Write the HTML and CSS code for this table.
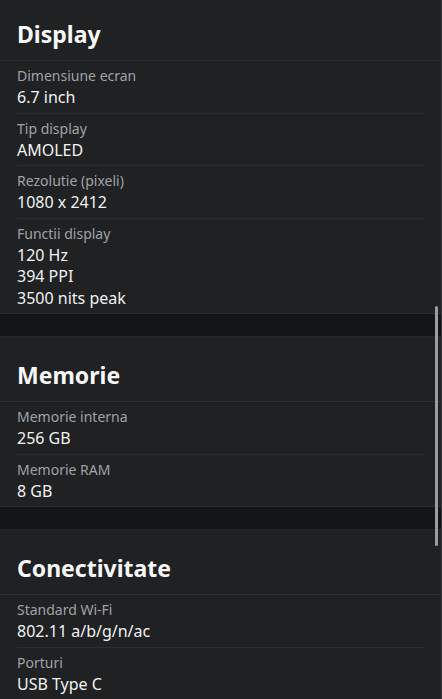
FILE: index.html
```html
<!DOCTYPE html>
<html lang="ro">
<head>
    <meta charset="UTF-8">
    <meta name="viewport" content="width=device-width, initial-scale=1.0">
    <title>Specificatii</title>
    <link rel="stylesheet" href="styles.css">
</head>
<body>
    <div class="page">
        <section class="spec-group">
            <h2 class="spec-title">Display</h2>
            <div class="spec-item">
                <div class="spec-label">Dimensiune ecran</div>
                <div class="spec-value">6.7 inch</div>
            </div>
            <div class="spec-item">
                <div class="spec-label">Tip display</div>
                <div class="spec-value">AMOLED</div>
            </div>
            <div class="spec-item">
                <div class="spec-label">Rezolutie (pixeli)</div>
                <div class="spec-value">1080 x 2412</div>
            </div>
            <div class="spec-item">
                <div class="spec-label">Functii display</div>
                <div class="spec-value">120 Hz</div>
                <div class="spec-value">394 PPI</div>
                <div class="spec-value">3500 nits peak</div>
            </div>
        </section>

        <section class="spec-group">
            <h2 class="spec-title">Memorie</h2>
            <div class="spec-item">
                <div class="spec-label">Memorie interna</div>
                <div class="spec-value">256 GB</div>
            </div>
            <div class="spec-item">
                <div class="spec-label">Memorie RAM</div>
                <div class="spec-value">8 GB</div>
            </div>
        </section>

        <section class="spec-group">
            <h2 class="spec-title">Conectivitate</h2>
            <div class="spec-item">
                <div class="spec-label">Standard Wi-Fi</div>
                <div class="spec-value">802.11 a/b/g/n/ac</div>
            </div>
            <div class="spec-item">
                <div class="spec-label">Porturi</div>
                <div class="spec-value">USB Type C</div>
            </div>
        </section>
    </div>

    <!-- scroll indicator -->
    <div class="scroll-track"></div>
    <div class="scroll-thumb"></div>
</body>
</html>
```

FILE: styles.css
```css
/* General Reset */
body {
    font-family: 'Noto Sans', 'Open Sans', sans-serif;
    margin: 0;
    padding: 0;
    background-color: #131517;
    color: #f2f2f2;
    overflow: hidden;
}

.page {
    margin-top: -5px;
}

.spec-group {
    background-color: #1f2123;
    border-top: 1px solid #24272a;
    border-bottom: 1px solid #2a2d30;
    margin-bottom: 22px;
}

.spec-title {
    margin: 0;
    padding: 23px 17px 11px;
    font-size: 23px;
    line-height: 30px;
    font-weight: 700;
    color: #f7f7f7;
    border-bottom: 1px solid #2d3033;
}

.spec-item {
    margin: 0 18px 0 17px;
    padding: 5px 0 4px;
    border-top: 1px solid #2b2e31;
}

.spec-title + .spec-item {
    border-top: none;
}

.spec-label {
    font-size: 14px;
    line-height: 19px;
    margin-bottom: 2px;
    color: #9fa3a7;
}

.spec-value {
    font-size: 16px;
    line-height: 21.5px;
    color: #f2f2f2;
}

.scroll-track {
    position: fixed;
    top: 0;
    right: 0;
    width: 1px;
    height: 100%;
    background-color: #33363a;
}

.scroll-thumb {
    position: fixed;
    top: 306px;
    right: 4px;
    width: 3px;
    height: 240px;
    border-radius: 2px;
    background-color: #9c9c9c;
}
```
